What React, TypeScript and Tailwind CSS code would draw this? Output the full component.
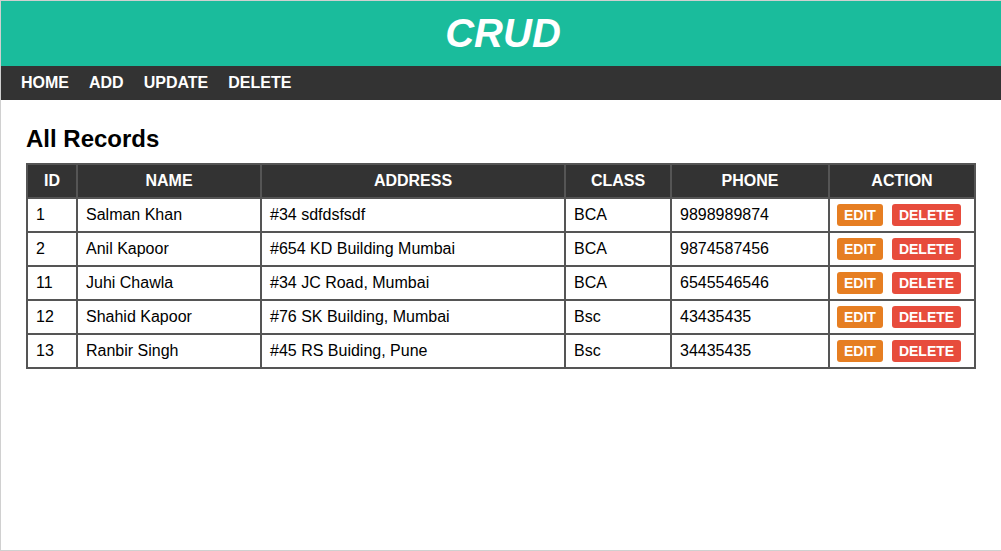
const rows = [
  { id: 1, name: 'Salman Khan', address: '#34 sdfdsfsdf', cls: 'BCA', phone: '9898989874' },
  { id: 2, name: 'Anil Kapoor', address: '#654 KD Building Mumbai', cls: 'BCA', phone: '9874587456' },
  { id: 11, name: 'Juhi Chawla', address: '#34 JC Road, Mumbai', cls: 'BCA', phone: '6545546546' },
  { id: 12, name: 'Shahid Kapoor', address: '#76 SK Building, Mumbai', cls: 'Bsc', phone: '43435435' },
  { id: 13, name: 'Ranbir Singh', address: '#45 RS Buiding, Pune', cls: 'Bsc', phone: '34435435' },
];

const th = 'border-2 border-[#555] bg-[#333] text-white font-bold text-center p-0 h-[34px]';
const td = 'border-2 border-[#555] pl-[8px] pr-[7px] py-0 h-[34px] text-left';

export default function App() {
  return (
    <div className="min-h-[551px] bg-white border-t border-l border-b border-[#d0d0d0] font-['Liberation_Sans',Arial,sans-serif] text-[16px] text-black">
      {/* header */}
      <header className="h-[65px] bg-[#1abc9c] flex items-center justify-center pl-[4px]">
        <h1 className="text-white text-[40px] font-bold italic leading-none -mt-[2px]">CRUD</h1>
      </header>
      <nav className="h-[34px] bg-[#333] flex items-center pl-[10px]">
        {['HOME', 'ADD', 'UPDATE', 'DELETE'].map((item) => (
          <a key={item} href="#" className="text-white font-bold px-[10px] leading-none">
            {item}
          </a>
        ))}
      </nav>

      <main className="px-[25px] pt-[27px]">
        <h2 className="text-[24px] font-bold leading-none mb-[12px]">All Records</h2>
        <table className="w-full border-collapse">
          <thead>
            <tr>
              <th className={`${th} w-[50px]`}>ID</th>
              <th className={`${th} w-[184px]`}>NAME</th>
              <th className={`${th} w-[304px]`}>ADDRESS</th>
              <th className={`${th} w-[106px]`}>CLASS</th>
              <th className={`${th} w-[158px]`}>PHONE</th>
              <th className={th}>ACTION</th>
            </tr>
          </thead>
          <tbody>
            {rows.map((r) => (
              <tr key={r.id}>
                <td className={td}>{r.id}</td>
                <td className={td}>{r.name}</td>
                <td className={td}>{r.address}</td>
                <td className={td}>{r.cls}</td>
                <td className={td}>{r.phone}</td>
                <td className="border-2 border-[#555] px-[7px] py-0 h-[34px]">
                  <div className="flex gap-[9px]">
                    <button className="h-[22px] px-[7px] rounded-[3px] bg-[#e67e22] text-white text-[14px] font-bold leading-none">EDIT</button>
                    <button className="h-[22px] px-[7px] rounded-[3px] bg-[#e74c3c] text-white text-[14px] font-bold leading-none">DELETE</button>
                  </div>
                </td>
              </tr>
            ))}
          </tbody>
        </table>
      </main>
    </div>
  );
}
